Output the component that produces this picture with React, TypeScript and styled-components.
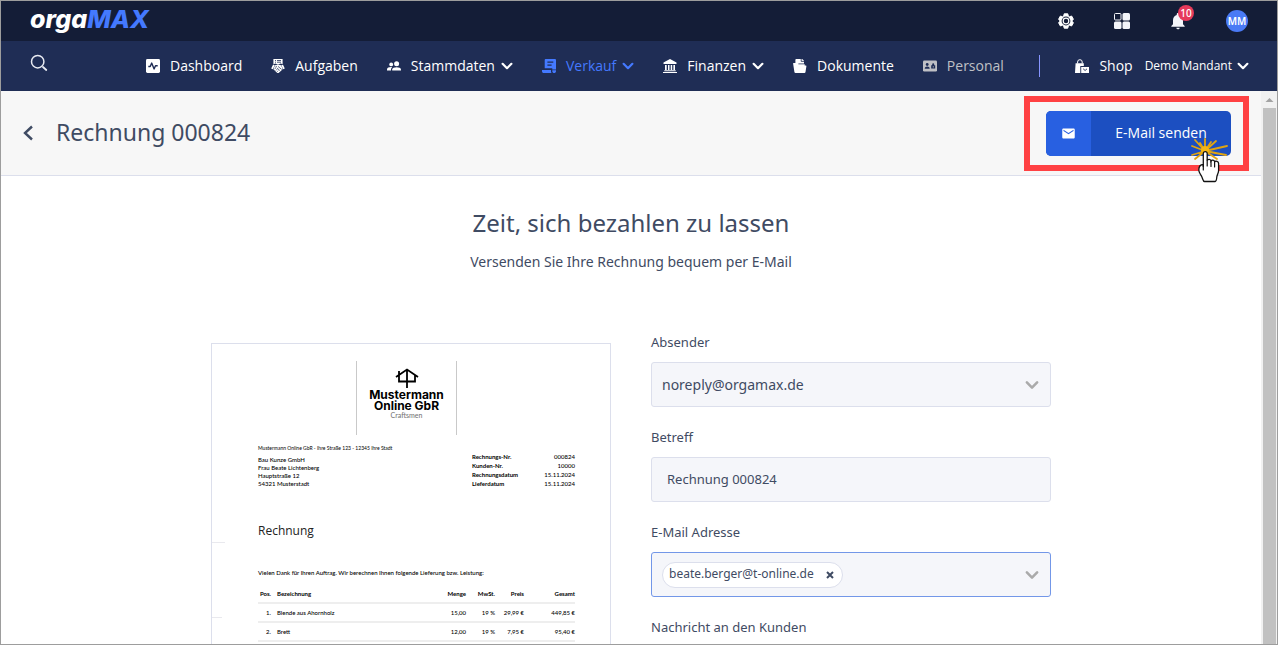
import React from "react";
import styled, { createGlobalStyle } from "styled-components";
import { MdEmail, MdNotifications } from "react-icons/md";

const color = {
  ink: "#3f4b63",
  line: "#dcdfec",
  field: "#f5f6fa",
  night: "#141d37",
  navy: "#1f2d55",
  blue: "#4479ff",
  frame: "#9d9d9d",
};

const GlobalStyle = createGlobalStyle`
  * { box-sizing: border-box; }
  body { margin: 0; background: #fff; color: ${color.ink}; font-family: "Noto Sans", "Open Sans", sans-serif; }
  button, input, select { font: inherit; color: inherit; }
  h1, h2, h3, p { margin: 0; font-weight: 400; }
`;

const Shell = styled.div`
  height: 100vh;
  display: flex;
  flex-direction: column;
  overflow: hidden;
  border: 1px solid ${color.frame};
`;

const TopBar = styled.header`
  flex: none;
  height: 40px;
  padding: 0 29px;
  display: flex;
  align-items: center;
  justify-content: space-between;
  background: ${color.night};
  color: #fff;
`;

const Logo = styled.a`
  font: italic 800 25px/32px Inter, sans-serif;
  font-feature-settings: "cv11";
  color: #fff;
  text-decoration: none;
  padding-bottom: 5px;
`;

const LogoAccent = styled.span`
  color: ${color.blue};
`;

const Tools = styled.div`
  display: flex;
  align-items: center;
  gap: 36px;
`;

const ToolButton = styled.button`
  position: relative;
  display: grid;
  place-items: center;
  width: 20px;
  height: 20px;
  padding: 0;
  border: 0;
  background: none;
  color: #f4f5f9;
`;

const Badge = styled.span`
  position: absolute;
  top: -6px;
  left: 10px;
  width: 16px;
  height: 16px;
  border-radius: 50%;
  background: #e63a5b;
  color: #fff;
  font-size: 10px;
  font-weight: 500;
  line-height: 16px;
  text-align: center;
`;

const Avatar = styled.button`
  width: 22px;
  height: 22px;
  margin-left: 2px;
  padding: 0;
  border: 0;
  border-radius: 50%;
  background: #4a7af5;
  color: #fff;
  font-size: 10px;
  font-weight: 600;
  line-height: 22px;
`;

const NavBar = styled.div`
  flex: none;
  height: 50px;
  padding: 0 28px 0 29px;
  display: flex;
  align-items: center;
  background: ${color.navy};
  color: #fff;
  font-family: "Open Sans", "Noto Sans", sans-serif;
  white-space: nowrap;
`;

const SearchButton = styled.button`
  display: grid;
  width: 20px;
  height: 20px;
  margin-bottom: 6px;
  padding: 0;
  border: 0;
  background: none;
`;

const Menu = styled.nav`
  margin-left: 96px;
  display: flex;
  align-items: center;
  gap: 29px;
`;

const NavLink = styled.a<{ $tone?: string }>`
  display: flex;
  align-items: center;
  gap: 10px;
  color: ${(p) => p.$tone ?? "#fff"};
  font-size: 14px;
  font-weight: 500;
  line-height: 20px;
  text-decoration: none;
`;

const LinkText = styled.span`
  display: flex;
  align-items: center;
  gap: 6px;
`;

const Account = styled.div`
  margin-left: auto;
  display: flex;
  align-items: center;
`;

const Divider = styled.span`
  width: 1px;
  height: 22px;
  margin-right: 35px;
  background: #8795ff;
`;

const TenantButton = styled.button`
  display: flex;
  align-items: center;
  gap: 5px;
  margin-left: 12px;
  padding: 0;
  border: 0;
  background: none;
  font-size: 12px;
  font-weight: 500;
  line-height: 20px;
`;

const Body = styled.div`
  flex: 1;
  min-height: 0;
  display: flex;
`;

const Page = styled.main`
  flex: 1;
  min-width: 0;
  overflow: hidden;
`;

const Scrollbar = styled.div`
  flex: none;
  width: 16px;
  padding: 0 1px 0 2px;
  display: flex;
  flex-direction: column;
  background: #f1f1f1;
`;

const ScrollArrow = styled.svg`
  flex: none;
  width: 13px;
  height: 17px;
`;

const ScrollThumb = styled.div`
  flex: 1;
  background: #c1c1c1;
`;

const PageHeader = styled.div`
  height: 85px;
  padding: 0 30px 0 19px;
  display: flex;
  align-items: center;
  background: #f7f7f7;
  border-bottom: 1px solid ${color.line};
`;

const BackButton = styled.button`
  display: grid;
  padding: 0;
  margin-right: 20px;
  border: 0;
  background: none;
`;

const Title = styled.h1`
  padding-bottom: 2px;
  font-size: 23px;
  line-height: 32px;
`;

const SendArea = styled.div`
  position: relative;
  margin-left: auto;
`;

const SendButton = styled.button`
  display: flex;
  width: 185px;
  height: 45px;
  padding: 0;
  border: 0;
  border-radius: 5px;
  overflow: hidden;
  background: #1c4fc1;
  color: #fff;
  font-family: "Open Sans", "Noto Sans", sans-serif;
  font-size: 14px;
  font-weight: 500;
  line-height: 44px;
`;

const SendIcon = styled.span`
  width: 45px;
  height: 45px;
  display: grid;
  place-items: center;
  background: #2860e1;
`;

const SendLabel = styled.span`
  flex: 1;
  text-align: center;
`;

const Highlight = styled.span`
  position: absolute;
  inset: -15px -18px -15px -22px;
  border: 6px solid #ff4143;
  pointer-events: none;
`;

const Pointer = styled.svg`
  position: absolute;
  right: 1px;
  bottom: -28px;
  width: 40px;
  height: 47px;
  pointer-events: none;
`;

const Intro = styled.div`
  padding: 31px 20px 0;
  text-align: center;
`;

const IntroTitle = styled.h2`
  font-size: 24px;
  line-height: 32px;
`;

const IntroText = styled.p`
  margin-top: 13px;
  font-size: 14px;
  line-height: 20px;
`;

const Columns = styled.div`
  margin: 60px auto 0;
  max-width: 840px;
  display: grid;
  grid-template-columns: 1fr 1fr;
  gap: 40px;
`;

const Paper = styled.article`
  margin-top: 11px;
  min-height: 566px;
  padding: 17px 35px 0 46px;
  border: 1px solid ${color.line};
  background:
    linear-gradient(#e9e9ee, #e9e9ee) 0 198px / 13px 1px no-repeat,
    linear-gradient(#e9e9ee, #e9e9ee) 0 273px / 10px 1px no-repeat,
    #fff;
  color: #000;
  font: 500 6px/9px Lato, "Noto Sans", sans-serif;
`;

const Brand = styled.div`
  width: 101px;
  height: 74px;
  margin-left: 98px;
  padding-top: 7px;
  display: flex;
  flex-direction: column;
  align-items: center;
  border: solid #c9c9c9;
  border-width: 0 1px;
`;

const BrandName = styled.strong`
  margin-top: 1px;
  font-family: Inter, sans-serif;
  font-size: 12px;
  line-height: 11px;
  text-align: center;
`;

const BrandClaim = styled.span`
  color: #777;
  font-size: 7px;
  line-height: 8px;
`;

const LetterHead = styled.div`
  margin-top: 9px;
  display: flex;
  justify-content: space-between;
`;

const Sender = styled.p`
  font-size: 5px;
  line-height: 9px;
`;

const Address = styled.address`
  margin-top: 3px;
  font-style: normal;
  line-height: 8px;
  white-space: pre-line;
`;

const Facts = styled.dl`
  margin: 8px 0 0;
  width: 103px;
  display: grid;
  grid-template-columns: 1fr auto;
`;

const FactName = styled.dt`
  font-weight: 700;
`;

const FactValue = styled.dd`
  margin: 0;
  text-align: right;
`;

const DocTitle = styled.h3`
  margin-top: 34px;
  font: 400 12px/18px "Open Sans", sans-serif;
  color: #222;
`;

const Greeting = styled.p`
  margin-top: 28px;
  font-weight: 500;
`;

const Items = styled.table`
  width: 100%;
  margin-top: 7px;
  border-collapse: collapse;
  table-layout: fixed;
`;

const Cell = styled.td<{ $left?: boolean }>`
  height: 19px;
  padding: ${(p) => (p.$left ? "0 0 0 6px" : "0")};
  border-bottom: 2px solid #eee;
  text-align: ${(p) => (p.$left ? "left" : "right")};
  font-weight: 500;
`;

const HeadCell = styled(Cell)`
  font-weight: 700;
`;

const Col = styled.col<{ $w?: number }>`
  width: ${(p) => (p.$w ? `${p.$w}px` : "auto")};
`;

const Form = styled.form`
  display: flex;
  flex-direction: column;
  gap: 20px;
`;

const Field = styled.div`
  display: flex;
  flex-direction: column;
  gap: 10px;
`;

const Label = styled.label`
  font-size: 13px;
  line-height: 20px;
`;

const Control = styled.div<{ $active?: boolean }>`
  height: 45px;
  display: grid;
  grid-template-columns: 1fr 34px;
  align-items: center;
  border: 1px solid ${(p) => (p.$active ? "#7397e8" : color.line)};
  border-radius: 3px;
  background: ${color.field};
  font-size: 14px;
`;

const Select = styled.select`
  grid-area: 1 / 1 / 2 / 3;
  width: 100%;
  height: 43px;
  padding: 0 34px 0 10px;
  border: 0;
  background: none;
  appearance: none;
  outline: none;
`;

const TextInput = styled.input`
  grid-area: 1 / 1 / 2 / 3;
  width: 100%;
  height: 43px;
  padding: 0 15px 2px;
  border: 0;
  background: none;
  outline: none;
  font-size: 13px;
`;

const Arrow = styled.span`
  grid-area: 1 / 2;
  display: grid;
  justify-content: start;
  padding-left: 9px;
  color: #aaa;
  pointer-events: none;
`;

const Tags = styled.div`
  grid-area: 1 / 1;
  display: flex;
  align-items: center;
  min-width: 0;
  padding-left: 10px;
`;

const Tag = styled.span`
  display: flex;
  align-items: center;
  gap: 12px;
  height: 26px;
  padding: 0 8px 2px 6px;
  border: 1px solid ${color.line};
  border-radius: 13px;
  background: #fff;
  font-size: 12px;
  line-height: 20px;
`;

const TagRemove = styled.button`
  display: grid;
  padding: 2px 0 0;
  border: 0;
  background: none;
`;

const TagInput = styled.input`
  flex: 1;
  min-width: 0;
  border: 0;
  background: none;
  outline: none;
`;

const Chevron = ({ size = 12 }: { size?: number }) => (
  <svg width={size} height={size} viewBox="0 0 12 12" fill="none" stroke="currentColor" strokeWidth="2.2" strokeLinecap="round" strokeLinejoin="round" aria-hidden>
    <path d="M1.6 3.8 6 8.2l4.4-4.4" />
  </svg>
);

const Glyph = ({ children }: { children: React.ReactNode }) => (
  <svg width="14" height="14" viewBox="0 0 14 14" fill="currentColor" aria-hidden>
    {children}
  </svg>
);

const DashboardIcon = () => (
  <Glyph>
    <rect width="14" height="14" rx="1.4" />
    <path d="M2.3 7.5h1.9l1.5-3.4 2.4 5.8 1.4-3.1h2.2" fill="none" stroke={color.navy} strokeWidth="1.4" strokeLinejoin="round" />
  </Glyph>
);

const TasksIcon = () => (
  <Glyph>
    <path d="M2.4 0h9.2v5.2L9.8 4.6 7 5.6 4.2 4.6l-1.8.8z" />
    <path d="M4 1.5h1M6 1.5h4M4 3.2h1M6 3.2h4" stroke={color.navy} strokeWidth=".8" />
    <path d="M2 5.8.2 9.4l1.6.8 2-4zM12 5.8l1.8 3.6-1.6.8-2-4z" />
    <path d="M4 6.2 7 5.6l3 .6 1.7 3.8-1.3 1.5L7.6 14H6.3l-3.9-3.7z" />
    <path d="m4.2 8.4 1.7-1.3M7 7.4l3.6 3M5.8 8.8l3 2.7M3.5 10.2l1.3-1.3M4.9 11.5l1.3-1.4M6.3 12.7l1-1.1" fill="none" stroke={color.navy} strokeWidth=".7" />
  </Glyph>
);

const PeopleIcon = () => (
  <Glyph>
    <circle cx="9.6" cy="4.7" r="2.5" />
    <path d="M5.2 11.6v-1.2c0-3 8.8-3 8.8 0v1.2z" />
    <circle cx="4.2" cy="5.4" r="1.9" />
    <path d="M0 11.6v-1.1C0 8.4 3 7.9 5.2 8.2 4.3 9 4 9.7 4 10.5v1.1z" />
  </Glyph>
);

const InvoiceIcon = () => (
  <Glyph>
    <path fillRule="evenodd" d="M3.6 0h9.5c.5 0 .9.4.9.9v9.6h-3.7V9.3H2.7V.9c0-.5.4-.9.9-.9zM5.4 2.6v1.2h5.9V2.6zm0 3v1.2h4.2V5.6z" />
    <path d="M0 11h9v1.7c0 .5.3 1 .7 1.3H1.8C.8 14 0 13.2 0 12.2zM10.3 11.2H14v1c0 1-.8 1.8-1.8 1.8s-1.9-.8-1.9-1.8z" />
  </Glyph>
);

const BankIcon = () => (
  <Glyph>
    <path d="M7 0 13.5 3.5V5H.5V3.5zM2 6h1.7v5H2zM5 6h1.5v5H5zM7.7 6h1.5v5H7.7zM10.4 6H12v5h-1.6zM1.3 11.3h11.4v.9H1.3zM0 13h14v1H0z" />
  </Glyph>
);

const DocumentsIcon = () => (
  <Glyph>
    <path d="M3.200 0h6l1.800 1.800v3.400H2.400V.8c0-.4.3-.8.8-.8z" />
    <path d="M8.200 0v2.400H11" stroke={color.navy} strokeWidth=".8" fill="none" />
    <path d="M.5 4h4l1 1.300h6.200v1.200h1.200c.4 0 .6.3.5.7l-.9 5.900c-.1.500-.5.9-1 .9H2.500c-.6 0-1-.4-1.100-.9L.1 4.600c-.1-.4.1-.6.400-.6z" />
    <path d="M5.400 4.700H11" stroke={color.navy} strokeWidth=".6" />
  </Glyph>
);

const StaffIcon = () => (
  <Glyph>
    <rect y="1.5" width="14" height="11" rx="1.2" />
    <g fill={color.navy}>
      <circle cx="4.2" cy="5.5" r="1.4" />
      <path d="M1.7 9.7c0-3 5-3 5 0z" />
      <path d="M8.2 9.5V6.3h1V5.2a1 1 0 0 1 2 0v1.1h1v3.2z" />
    </g>
    <path d="M9.8 7.2h.9v1.3h-.9z" />
  </Glyph>
);

const ShopIcon = () => (
  <Glyph>
    <path d="M2.6 4.5V3a2.3 2.3 0 0 1 4.6 0v1.5" fill="none" stroke="currentColor" strokeWidth="1" />
    <path d="M.6 4.2h8.2V7H5.3v7H0z" />
    <path d="M6.2 8H14v6H6.2z" />
    <path d="m8.2 9.8 1.9 1.7L12 9.8" fill="none" stroke={color.navy} strokeWidth=".9" />
  </Glyph>
);

const GearIcon = () => (
  <svg width="16" height="16" viewBox="0 0 16 16" aria-hidden>
    <path
      d="M6.2.8h3.6l.5 2.3 1.1.7 2.2-.8 1.8 3.2L13.800 8l1.600 1.800L13.600 13l-2.200-.8-1.100.7-.5 2.300H6.200l-.5-2.300-1.100-.7-2.200.8L.6 9.800 2.200 8 .6 6.200 2.400 3l2.200.8 1.100-.7z"
      fill="#fff"
      stroke="#fff"
      strokeLinejoin="round"
    />
    <circle cx="8" cy="8" r="4.4" fill={color.night} />
    <circle cx="8" cy="8" r="2.8" fill="none" stroke="#fff" strokeWidth="1.2" />
  </svg>
);

const menu = [
  { label: "Dashboard", icon: <DashboardIcon /> },
  { label: "Aufgaben", icon: <TasksIcon /> },
  { label: "Stammdaten", icon: <PeopleIcon />, more: true },
  { label: "Verkauf", icon: <InvoiceIcon />, more: true, tone: color.blue },
  { label: "Finanzen", icon: <BankIcon />, more: true },
  { label: "Dokumente", icon: <DocumentsIcon /> },
  { label: "Personal", icon: <StaffIcon />, tone: "#bfc0c5" },
];

const facts = [
  ["Rechnungs-Nr.", "000824"],
  ["Kunden-Nr.", "10000"],
  ["Rechnungsdatum", "15.11.2024"],
  ["Lieferdatum", "15.11.2024"],
];

const items = [
  ["1.", "Blende aus Ahornholz", "15,00", "19 %", "29,99 €", "449,85 €"],
  ["2.", "Brett", "12,00", "19 %", "7,95 €", "95,40 €"],
];

const Invoice = () => (
  <Paper>
    <Brand>
      <svg width="24" height="20" viewBox="0 0 24 20" fill="none" stroke="#000" strokeWidth="1.8" aria-hidden>
        <path d="M1 9 12 1.5 23 9M4 7v6.5h16V7M4 7V3M12 1v19" />
      </svg>
      <BrandName>
        Mustermann
        <br />
        Online GbR
      </BrandName>
      <BrandClaim>Craftsmen</BrandClaim>
    </Brand>
    <LetterHead>
      <div>
        <Sender>Mustermann Online GbR - Ihre Straße 123 - 12345 Ihre Stadt</Sender>
        <Address>{"Bau Kunze GmbH\nFrau Beate Lichtenberg\nHauptstraße 12\n54321 Musterstadt"}</Address>
      </div>
      <Facts>
        {facts.map(([name, value]) => (
          <React.Fragment key={name}>
            <FactName>{name}</FactName>
            <FactValue>{value}</FactValue>
          </React.Fragment>
        ))}
      </Facts>
    </LetterHead>
    <DocTitle>Rechnung</DocTitle>
    <Greeting>Vielen Dank für Ihren Auftrag. Wir berechnen Ihnen folgende Lieferung bzw. Leistung:</Greeting>
    <Items>
      <colgroup>
        <Col $w={13} />
        <Col />
        <Col $w={40} />
        <Col $w={29} />
        <Col $w={29} />
        <Col $w={51} />
      </colgroup>
      <thead>
        <tr>
          {["Pos.", "Bezeichnung", "Menge", "MwSt.", "Preis", "Gesamt"].map((name, i) => (
            <HeadCell as="th" key={name} $left={i === 1}>{name}</HeadCell>
          ))}
        </tr>
      </thead>
      <tbody>
        {items.map((row) => (
          <tr key={row[0]}>
            {row.map((value, i) => (
              <Cell key={i} $left={i === 1}>{value}</Cell>
            ))}
          </tr>
        ))}
      </tbody>
    </Items>
  </Paper>
);

const ClickPointer = () => (
  <Pointer viewBox="0 0 40 47" aria-hidden>
    <path
      d="M15 14 5 3M15 14V2M15 14 26 4M15 14l22-5M15 14l21 4M15 14 2 9M15 14 2 18M15 14 5 22M15 14l12 8M15 14l-5-8M15 14l6-9"
      fill="none"
      stroke="#e0a411"
      strokeWidth="1.8"
      strokeLinecap="round"
    />
    <circle cx="15" cy="13" r="4" fill="#f3b515" />
    <path
      d="M13.3 30V16.5c0-2.6 3.9-2.6 3.9 0v7c.5-1.6 3.6-1.5 3.8.5.7-1.3 3.4-1.1 3.6.8.9-1.1 4-.8 4 1.8v6.9c0 2.5-1.6 4-1.8 6.5-.1 1.4-.3 4.500-1.700 4.500H14.500c-1.500 0-1.600-2.600-2.700-4.800-1-2-3-3.700-3-6.700 0-3 1-5.500 4.500-5.500z"
      fill="#fff"
      stroke="#111"
      strokeWidth="1.3"
    />
    <path d="M13.3 27.5V33M17.2 23v6M21 24v5.5M24.6 25v5" stroke="#111" strokeWidth="1.2" fill="none" strokeLinecap="round" />
  </Pointer>
);

export default function App() {
  return (
    <Shell>
      <GlobalStyle />
      <TopBar>
        <Logo href="#">
          orga<LogoAccent>MAX</LogoAccent>
        </Logo>
        <Tools>
          <ToolButton aria-label="Einstellungen">
            <GearIcon />
          </ToolButton>
          <ToolButton aria-label="Apps">
            <svg width="16" height="16" viewBox="0 0 16 16" fill="currentColor" aria-hidden>
              <rect x=".5" y=".5" width="6.5" height="6.5" rx="1" fill="none" stroke="currentColor" />
              <rect x="8.5" width="7.5" height="7.5" rx="1.5" />
              <rect y="8.5" width="7.5" height="7.5" rx="1.5" />
              <rect x="8.5" y="8.5" width="7.5" height="7.5" rx="1.5" />
            </svg>
          </ToolButton>
          <ToolButton aria-label="Benachrichtigungen">
            <MdNotifications size={20} />
            <Badge>10</Badge>
          </ToolButton>
          <Avatar>MM</Avatar>
        </Tools>
      </TopBar>

      <NavBar>
        <SearchButton aria-label="Suche">
          <svg width="20" height="20" viewBox="0 0 20 20" fill="none" stroke="#e9ebf2" strokeWidth="1.5" strokeLinecap="round" aria-hidden>
            <circle cx="7.7" cy="8.7" r="6.2" />
            <path d="m13 14 3.3 3" strokeWidth="1.8" />
          </svg>
        </SearchButton>
        <Menu>
          {menu.map(({ label, icon, more, tone }) => (
            <NavLink href="#" key={label} $tone={tone}>
              {icon}
              <LinkText>
                {label}
                {more && <Chevron />}
              </LinkText>
            </NavLink>
          ))}
        </Menu>
        <Account>
          <Divider />
          <NavLink href="#">
            <ShopIcon />
            Shop
          </NavLink>
          <TenantButton>
            Demo Mandant
            <Chevron />
          </TenantButton>
        </Account>
      </NavBar>

      <Body>
        <Page>
          <PageHeader>
            <BackButton aria-label="Zurück">
              <svg width="16" height="18" viewBox="0 0 16 18" fill="none" stroke="currentColor" strokeWidth="2.4" aria-hidden>
                <path d="M12 2.5 5 9l7 6.5" />
              </svg>
            </BackButton>
            <Title>Rechnung 000824</Title>
            <SendArea>
              <SendButton>
                <SendIcon>
                  <MdEmail size={15} />
                </SendIcon>
                <SendLabel>E-Mail senden</SendLabel>
              </SendButton>
              <Highlight />
              <ClickPointer />
            </SendArea>
          </PageHeader>

          <Intro>
            <IntroTitle>Zeit, sich bezahlen zu lassen</IntroTitle>
            <IntroText>Versenden Sie Ihre Rechnung bequem per E-Mail</IntroText>
          </Intro>

          <Columns>
            <Invoice />
            <Form>
              <Field>
                <Label htmlFor="sender">Absender</Label>
                <Control>
                  <Select id="sender">
                    <option>noreply@orgamax.de</option>
                  </Select>
                  <Arrow>
                    <Chevron size={14} />
                  </Arrow>
                </Control>
              </Field>
              <Field>
                <Label htmlFor="subject">Betreff</Label>
                <Control>
                  <TextInput id="subject" defaultValue="Rechnung 000824" />
                </Control>
              </Field>
              <Field>
                <Label htmlFor="recipient">E-Mail Adresse</Label>
                <Control $active>
                  <Tags>
                    <Tag>
                      beate.berger@t-online.de
                      <TagRemove type="button" aria-label="Entfernen">
                        <svg width="8" height="8" viewBox="0 0 8 8" stroke="currentColor" strokeWidth="2" aria-hidden>
                          <path d="m1 1 6 6M7 1 1 7" />
                        </svg>
                      </TagRemove>
                    </Tag>
                    <TagInput id="recipient" />
                  </Tags>
                  <Arrow>
                    <Chevron size={14} />
                  </Arrow>
                </Control>
              </Field>
              <Field>
                <Label htmlFor="message">Nachricht an den Kunden</Label>
                <Control>
                  <TextInput id="message" />
                </Control>
              </Field>
            </Form>
          </Columns>
        </Page>
        <Scrollbar aria-hidden>
          <ScrollArrow viewBox="0 0 13 17">
            <path d="M2.5 11 6.5 7l4 4z" fill="#a3a3a3" />
          </ScrollArrow>
          <ScrollThumb />
        </Scrollbar>
      </Body>
    </Shell>
  );
}
